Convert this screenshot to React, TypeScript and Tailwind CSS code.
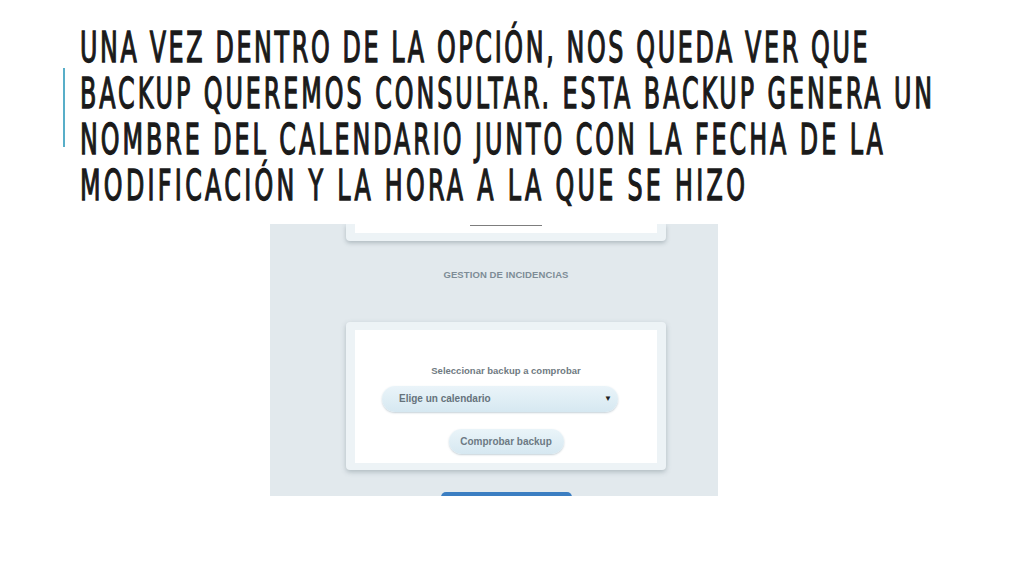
import { ReactNode } from "react";

// line text plus the tracking that brings its width to the reference
const titleLines = [
  { text: "UNA VEZ DENTRO DE LA OPCIÓN, NOS QUEDA VER QUE", track: "tracking-[0.1em]" },
  { text: "BACKUP QUEREMOS CONSULTAR. ESTA BACKUP GENERA UN", track: "tracking-[0.112em]" },
  { text: "NOMBRE DEL CALENDARIO JUNTO CON LA FECHA DE LA", track: "tracking-[0.112em]" },
  { text: "MODIFICACIÓN Y LA HORA A LA QUE SE HIZO", track: "tracking-[0.125em]" },
];

const Title = (): ReactNode => (
  <div className="flex">
    {/* accent bar on the left of the title */}
    <div className="ml-[63px] mt-[43px] h-[79px] w-[2px] shrink-0 bg-[#58aec8]" />
    <h1
      className="ml-[15px] origin-left scale-x-[0.63] whitespace-nowrap text-[42px] font-normal leading-[46px] text-[#1a1a1a] [-webkit-text-stroke:1.3px_#1a1a1a]"
      style={{ fontFamily: '"DejaVu Sans Condensed", "Liberation Sans Narrow", "Liberation Sans", sans-serif' }}
    >
      {titleLines.map((line) => (
        <div key={line.text} className={line.track}>
          {line.text}
        </div>
      ))}
    </h1>
  </div>
);

const Capture = (): ReactNode => (
  <div
    className="ml-[270px] mt-[15px] flex h-[272px] w-[448px] flex-col items-center overflow-hidden bg-[#e2e9ed] pl-[24px]"
    style={{ fontFamily: '"Liberation Sans", Arial, sans-serif' }}
  >
    {/* bottom of previous card, cut off */}
    <div className="h-[17px] w-[320px] shrink-0 rounded-b-[4px] bg-[#edf3f6] px-[9px] pb-[8px] shadow-[0_2px_4px_rgba(80,100,110,0.35)]">
      <div className="flex h-full justify-center bg-white">
        <div className="mt-[1px] h-[1px] w-[72px] bg-[#7d7d7d]" />
      </div>
    </div>

    <div className="mt-[27px] text-[9.5px] font-bold tracking-[0.01em] text-[#7d8c96]">GESTION DE INCIDENCIAS</div>

    <div className="mt-[40px] w-[320px] shrink-0 rounded-[4px] bg-[#edf3f6] px-[9px] pb-[7px] pt-[8px] shadow-[0_2px_5px_rgba(80,100,110,0.35)]">
      <div className="flex h-[133px] flex-col items-center bg-white pt-[34px]">
        <div className="text-[9.5px] font-bold text-[#6f7a82]">Seleccionar backup a comprobar</div>
        <div className="mr-[12px] mt-[7px] flex h-[26px] w-[236px] items-center justify-between rounded-full bg-gradient-to-b from-[#eaf4f9] to-[#d6e8f1] pl-[17px] pr-[6px] shadow-[0_1px_2px_rgba(90,120,140,0.35)]">
          <span className="text-[10px] font-bold text-[#66737c]">Elige un calendario</span>
          <span className="text-[8px] text-[#222]">▼</span>
        </div>
        <div className="mt-[17px] flex h-[25px] w-[115px] items-center justify-center rounded-full bg-gradient-to-b from-[#eaf4f9] to-[#d6e8f1] shadow-[0_1px_2px_rgba(90,120,140,0.35)]">
          <span className="text-[10px] font-bold text-[#6d7a84]">Comprobar backup</span>
        </div>
      </div>
    </div>

    <div className="mt-[22px] h-[10px] w-[131px] shrink-0 rounded-t-[5px] bg-[#3b7ec2]" />
  </div>
);

export default function App(): ReactNode {
  return (
    <div className="h-[576px] w-[1024px] overflow-hidden bg-white pt-[25px]">
      <Title />
      <Capture />
    </div>
  );
}
